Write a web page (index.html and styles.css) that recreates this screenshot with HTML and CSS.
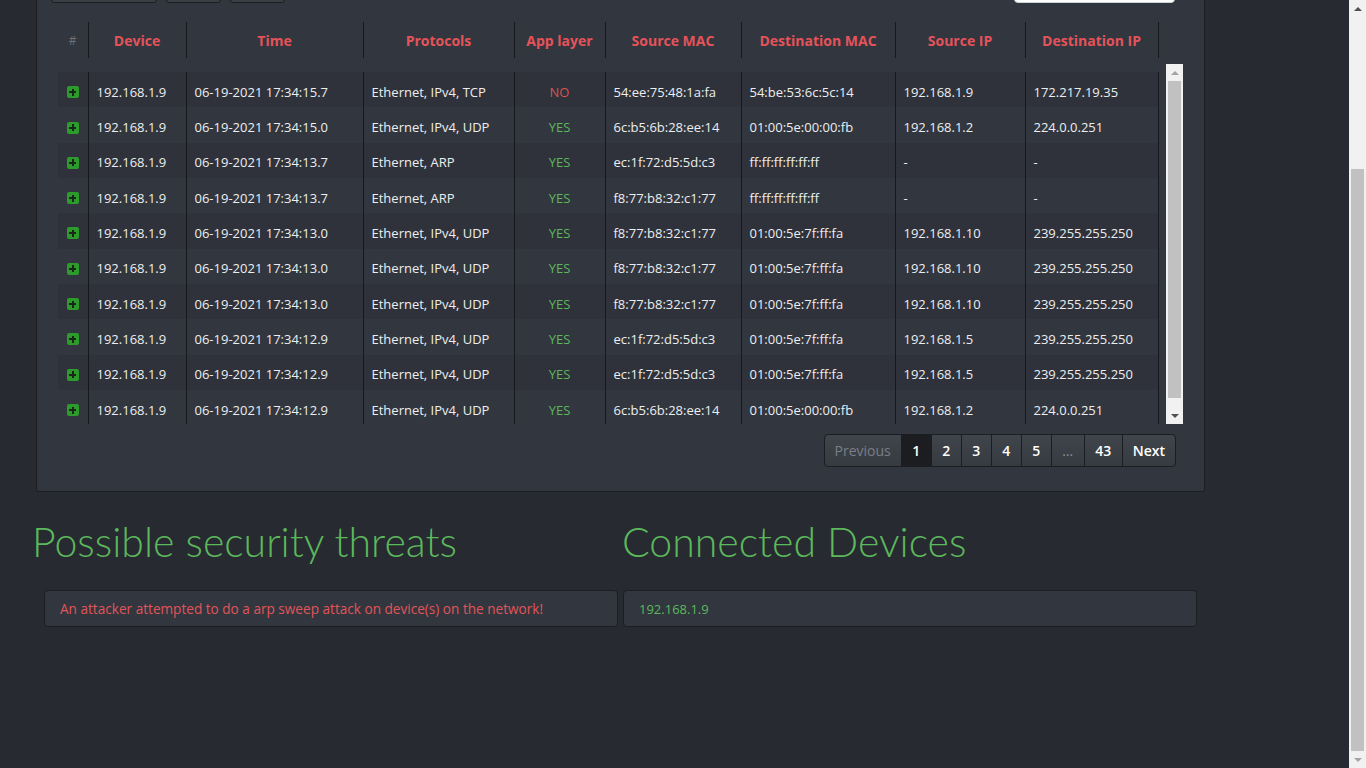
FILE: index.html
```html
<!DOCTYPE html>
<html lang="en">
<head>
  <meta charset="UTF-8" />
  <meta name="viewport" content="width=device-width, initial-scale=1.0"/>
  <title>Packet Monitor</title>
  <link rel="stylesheet" href="styles.css">
</head>
<body>
  <div class="navbar">
    <svg class="logo" width="28" height="28" viewBox="0 0 28 28">
      <circle cx="14" cy="14" r="12" fill="none" stroke="#5cb85c" stroke-width="2"/>
      <path d="M5 14h5l3-6 3 12 3-6h4" fill="none" stroke="#5cb85c" stroke-width="2"/>
    </svg>
  </div>

  <div class="wrapper">
    <div class="card">
      <div class="tools">
        <div class="btn-group">
          <button class="tool-btn wide" aria-label="Copy"></button>
          <button class="tool-btn" aria-label="CSV"></button>
          <button class="tool-btn" aria-label="Print"></button>
        </div>
        <input class="search" type="text" aria-label="Search">
      </div>

      <table class="packets head">
        <colgroup>
          <col class="c-num"><col class="c-dev"><col class="c-time"><col class="c-proto"><col class="c-app">
          <col class="c-smac"><col class="c-dmac"><col class="c-sip"><col class="c-dip">
        </colgroup>
        <thead>
          <tr>
            <th class="num">#</th>
            <th>Device</th>
            <th>Time</th>
            <th>Protocols</th>
            <th>App layer</th>
            <th>Source MAC</th>
            <th>Destination MAC</th>
            <th>Source IP</th>
            <th>Destination IP</th>
          </tr>
        </thead>
      </table>

      <div class="scroll-body">
        <div class="rows">
          <table class="packets body">
            <colgroup>
              <col class="c-num"><col class="c-dev"><col class="c-time"><col class="c-proto"><col class="c-app">
              <col class="c-smac"><col class="c-dmac"><col class="c-sip"><col class="c-dip">
            </colgroup>
            <tbody>
              <tr>
                <td class="num"><span class="expand"></span></td>
                <td>192.168.1.9</td><td>06-19-2021 17:34:15.7</td><td>Ethernet, IPv4, TCP</td>
                <td class="app no">NO</td>
                <td>54:ee:75:48:1a:fa</td><td>54:be:53:6c:5c:14</td><td>192.168.1.9</td><td>172.217.19.35</td>
              </tr>
              <tr>
                <td class="num"><span class="expand"></span></td>
                <td>192.168.1.9</td><td>06-19-2021 17:34:15.0</td><td>Ethernet, IPv4, UDP</td>
                <td class="app yes">YES</td>
                <td>6c:b5:6b:28:ee:14</td><td>01:00:5e:00:00:fb</td><td>192.168.1.2</td><td>224.0.0.251</td>
              </tr>
              <tr>
                <td class="num"><span class="expand"></span></td>
                <td>192.168.1.9</td><td>06-19-2021 17:34:13.7</td><td>Ethernet, ARP</td>
                <td class="app yes">YES</td>
                <td>ec:1f:72:d5:5d:c3</td><td>ff:ff:ff:ff:ff:ff</td><td>-</td><td>-</td>
              </tr>
              <tr>
                <td class="num"><span class="expand"></span></td>
                <td>192.168.1.9</td><td>06-19-2021 17:34:13.7</td><td>Ethernet, ARP</td>
                <td class="app yes">YES</td>
                <td>f8:77:b8:32:c1:77</td><td>ff:ff:ff:ff:ff:ff</td><td>-</td><td>-</td>
              </tr>
              <tr>
                <td class="num"><span class="expand"></span></td>
                <td>192.168.1.9</td><td>06-19-2021 17:34:13.0</td><td>Ethernet, IPv4, UDP</td>
                <td class="app yes">YES</td>
                <td>f8:77:b8:32:c1:77</td><td>01:00:5e:7f:ff:fa</td><td>192.168.1.10</td><td>239.255.255.250</td>
              </tr>
              <tr>
                <td class="num"><span class="expand"></span></td>
                <td>192.168.1.9</td><td>06-19-2021 17:34:13.0</td><td>Ethernet, IPv4, UDP</td>
                <td class="app yes">YES</td>
                <td>f8:77:b8:32:c1:77</td><td>01:00:5e:7f:ff:fa</td><td>192.168.1.10</td><td>239.255.255.250</td>
              </tr>
              <tr>
                <td class="num"><span class="expand"></span></td>
                <td>192.168.1.9</td><td>06-19-2021 17:34:13.0</td><td>Ethernet, IPv4, UDP</td>
                <td class="app yes">YES</td>
                <td>f8:77:b8:32:c1:77</td><td>01:00:5e:7f:ff:fa</td><td>192.168.1.10</td><td>239.255.255.250</td>
              </tr>
              <tr>
                <td class="num"><span class="expand"></span></td>
                <td>192.168.1.9</td><td>06-19-2021 17:34:12.9</td><td>Ethernet, IPv4, UDP</td>
                <td class="app yes">YES</td>
                <td>ec:1f:72:d5:5d:c3</td><td>01:00:5e:7f:ff:fa</td><td>192.168.1.5</td><td>239.255.255.250</td>
              </tr>
              <tr>
                <td class="num"><span class="expand"></span></td>
                <td>192.168.1.9</td><td>06-19-2021 17:34:12.9</td><td>Ethernet, IPv4, UDP</td>
                <td class="app yes">YES</td>
                <td>ec:1f:72:d5:5d:c3</td><td>01:00:5e:7f:ff:fa</td><td>192.168.1.5</td><td>239.255.255.250</td>
              </tr>
              <tr>
                <td class="num"><span class="expand"></span></td>
                <td>192.168.1.9</td><td>06-19-2021 17:34:12.9</td><td>Ethernet, IPv4, UDP</td>
                <td class="app yes">YES</td>
                <td>6c:b5:6b:28:ee:14</td><td>01:00:5e:00:00:fb</td><td>192.168.1.2</td><td>224.0.0.251</td>
              </tr>
            </tbody>
          </table>
        </div>
        <div class="vscroll inner">
          <span class="arrow up off"></span>
          <span class="thumb"></span>
          <span class="arrow down"></span>
        </div>
      </div>

      <div class="pager">
        <a class="page disabled">Previous</a>
        <a class="page active">1</a>
        <a class="page">2</a>
        <a class="page">3</a>
        <a class="page">4</a>
        <a class="page">5</a>
        <a class="page dots">…</a>
        <a class="page">43</a>
        <a class="page next">Next</a>
      </div>
    </div>

    <div class="lower">
      <div class="threats">
        <h2>Possible security threats</h2>
        <div class="box">An attacker attempted to do a arp sweep attack on device(s) on the network!</div>
      </div>
      <div class="devices">
        <h2>Connected Devices</h2>
        <div class="box">192.168.1.9</div>
      </div>
    </div>
  </div>

  <!-- window scrollbar, drawn since the capture hides the native one -->
  <div class="vscroll window">
    <span class="arrow up"></span>
    <span class="thumb"></span>
    <span class="arrow down off"></span>
  </div>

  <script>
    // page is shown scrolled down to the threats section
    function toBottom() {
      window.scrollTo(0, document.documentElement.scrollHeight);
    }
    toBottom();
    window.addEventListener('load', toBottom);
  </script>
</body>
</html>
```

FILE: styles.css
```css
body, html {
  margin: 0;
  padding: 0;
}

body {
  background: #272a30;
  color: #eceef0;
  font-family: 'Open Sans', 'Noto Sans', sans-serif;
  font-size: 13px;
}

.navbar {
  height: 56px;
  margin-bottom: 76px;
  background: #1f2126;
  display: flex;
  align-items: center;
  padding: 0 36px;
}

.wrapper {
  width: 1169px;
  padding: 0 0 141px 36px;
}

.card {
  background: #32363e;
  border: 1px solid #1c1e22;
  border-radius: 3px;
  padding: 20px 21px 24px;
}

.tools {
  display: flex;
  justify-content: space-between;
  align-items: flex-end;
  margin: 0 8px 19px -7px;
}

.btn-group {
  display: flex;
  gap: 9px;
}

.tool-btn {
  width: 55px;
  height: 30px;
  background: #3a3e45;
  border: 1px solid #1c1e22;
  border-radius: 3px;
}

.tool-btn.wide {
  width: 106px;
}

.search {
  width: 161px;
  height: 30px;
  box-sizing: border-box;
  border: 1px solid #ced4da;
  border-radius: 4px;
  background: #fff;
}

.packets {
  width: 1100px;
  table-layout: fixed;
  border-collapse: collapse;
}

.c-num { width: 30px; }
.c-dev { width: 98px; }
.c-time { width: 177px; }
.c-proto { width: 151px; }
.c-app { width: 91px; }
.c-smac { width: 136px; }
.c-dmac { width: 154px; }
.c-sip { width: 130px; }
.c-dip { width: 133px; }

.packets th {
  height: 36px;
  padding: 0;
  border-left: 1px solid #16181b;
  border-right: 1px solid #16181b;
  color: #e5535a;
  font-size: 14px;
  font-weight: 700;
  text-align: center;
  white-space: nowrap;
}

.packets th.num {
  border-left: 0;
  color: #6b7079;
  font-weight: 400;
  font-size: 12px;
}

.scroll-body {
  display: flex;
  gap: 8px;
  margin-top: 6px;
  height: 360px;
  overflow: hidden;
}

.rows {
  width: 1100px;
  padding: 8px 0 9px;
}

.packets td {
  height: 35.33px;
  box-sizing: border-box;
  padding: 4px 8px 0;
  border-left: 1px solid #16181b;
  border-right: 1px solid #16181b;
  white-space: nowrap;
}

.packets td.num {
  border-left: 0;
  padding: 2px 0 0;
  text-align: center;
}

.packets tbody tr:nth-child(odd) {
  background: rgba(0, 0, 0, 0.06);
}

.expand {
  display: inline-block;
  width: 12px;
  height: 12px;
  border-radius: 2px;
  vertical-align: middle;
  background:
    linear-gradient(#1b261b, #1b261b) center / 2px 7px no-repeat,
    linear-gradient(#1b261b, #1b261b) center / 7px 2px no-repeat,
    #2c9b2c;
}

.packets td.app {
  text-align: center;
}

.yes { color: #5cb85c; }
.no { color: #d9534f; }

/* scrollbars */
.vscroll {
  width: 17px;
  flex: none;
  display: flex;
  flex-direction: column;
  align-items: center;
  background: #f1f1f1;
}

.vscroll.window {
  position: fixed;
  top: 0;
  right: 0;
  height: 100vh;
}

.arrow {
  height: 17px;
  width: 17px;
  flex: none;
  display: flex;
  align-items: center;
  justify-content: center;
}

.arrow::before {
  content: "";
  border-left: 4px solid transparent;
  border-right: 4px solid transparent;
}

.arrow.up::before {
  border-bottom: 4px solid #505050;
}

.arrow.down::before {
  border-top: 4px solid #505050;
}

.arrow.up.off::before {
  border-bottom-color: #a3a3a3;
}

.arrow.down.off::before {
  border-top-color: #a3a3a3;
}

.thumb {
  width: 13px;
  flex: 1;
  background: #c1c1c1;
}

.inner .thumb {
  margin-bottom: 9px;
}

.window .thumb {
  margin-top: 152px;
}

/* pagination */
.pager {
  display: flex;
  justify-content: flex-end;
  margin: 10px 7px 0 0;
}

.page {
  height: 33px;
  box-sizing: border-box;
  padding: 0 10.5px;
  display: flex;
  align-items: center;
  border: 1px solid #1b1d21;
  margin-left: -1px;
  background: linear-gradient(#40444b, #363a41);
  color: #fff;
  font-size: 14px;
  font-weight: 600;
}

.page:first-child {
  border-radius: 4px 0 0 4px;
}

.page:last-child {
  border-radius: 0 4px 4px 0;
}

.page.disabled,
.page.next {
  padding: 0 10px;
}

.page.active {
  background: #1b1d20;
}

.page.disabled {
  color: #7b7f86;
  font-weight: 400;
}

.page.dots {
  color: #8a8e95;
  font-weight: 400;
}

/* threats / devices */
.lower {
  display: grid;
  grid-template-columns: 590px 590px;
  margin-left: -4px;
}

.lower h2 {
  margin: 25px 0 23px;
  font-family: Lato, 'Open Sans', sans-serif;
  font-size: 41px;
  font-weight: 300;
  line-height: 50px;
  color: #5cb85c;
}

.box {
  width: 574px;
  height: 37px;
  box-sizing: border-box;
  display: flex;
  align-items: center;
  padding: 0 15px;
  background: #32363e;
  border: 1px solid #1c1e22;
  border-radius: 4px;
  font-size: 13px;
}

.threats .box {
  margin-left: 12px;
  color: #e0555a;
  font-size: 13.6px;
}

.devices .box {
  margin-left: 1px;
  color: #5cb85c;
}
```
